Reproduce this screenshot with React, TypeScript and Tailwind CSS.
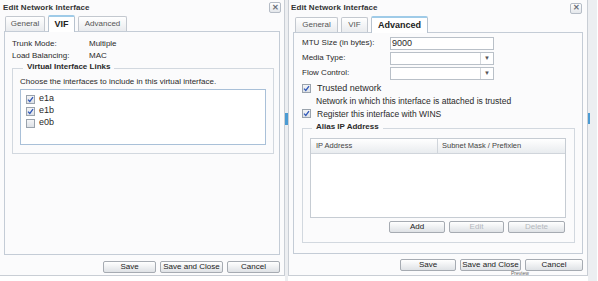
import React from 'react';

const font = "font-['Liberation_Sans',Arial,sans-serif]";
const dots = 'bg-[#fbfbfc] bg-[radial-gradient(#eef0f3_0.6px,transparent_0.7px)] bg-[length:4px_4px]';

function CloseBox() {
  return (
    <div className="w-[12px] h-[11px] border border-[#b5bcc6] rounded-[2px] bg-gradient-to-b from-white to-[#e4e7eb] flex items-center justify-center text-[8px] leading-none font-bold text-[#6a717a]">
      ✕
    </div>
  );
}

function Btn({ label, w, disabled }: { label: string; w: string; disabled?: boolean }) {
  return (
    <div
      className={`${w} h-[12px] border border-[#a6abb2] rounded-[2px] bg-gradient-to-b from-white to-[#dfe2e6] flex items-center justify-center text-[8px] leading-none ${
        disabled ? 'text-[#b4b8bd]' : 'text-[#222]'
      }`}
    >
      {label}
    </div>
  );
}

function Check({ on }: { on?: boolean }) {
  return (
    <div className="w-[9px] h-[9px] border border-[#9aa3ad] bg-gradient-to-b from-[#f4f5f7] to-[#dde1e6] flex items-center justify-center">
      {on && (
        <svg width="7" height="7" viewBox="0 0 7 7">
          <path d="M1 3.6 L2.8 5.4 L6 1.2" fill="none" stroke="#2f57b8" strokeWidth="1.3" />
        </svg>
      )}
    </div>
  );
}

function Tabs({ active, widths }: { active: string; widths: Record<string, string> }) {
  return (
    <div className="flex items-end gap-[3px] h-[17px]">
      {['General', 'VIF', 'Advanced'].map((t) => {
        const on = t === active;
        return (
          <div
            key={t}
            className={`${widths[t]} flex items-center justify-center border border-b-0 rounded-t-[2px] leading-none ${
              on
                ? 'h-[17px] bg-white border-[#b8c3cf] border-t-2 border-t-[#9fcbe8] font-bold text-[9px] text-[#222] -mb-px relative'
                : 'h-[15px] bg-gradient-to-b from-white to-[#e9ebee] border-[#c3c8cf] text-[8px] text-[#555]'
            }`}
          >
            {t}
          </div>
        );
      })}
    </div>
  );
}

function Footer({ widths }: { widths: [string, string, string] }) {
  return (
    <div className="flex justify-end gap-[4px]">
      <Btn label="Save" w={widths[0]} />
      <Btn label="Save and Close" w={widths[1]} />
      <Btn label="Cancel" w={widths[2]} />
    </div>
  );
}

function Field({ label, arrow }: { label: string; arrow?: boolean }) {
  return (
    <div className="flex items-center h-[13px]">
      <div className="w-[88px] text-[8px]">{label}</div>
      <div className="w-[104px] h-[13px] border border-[#b9c0c8] bg-white flex justify-end">
        {arrow && (
          <div className="w-[13px] border-l border-[#d2d6db] flex items-center justify-center text-[6px] text-[#555]">▼</div>
        )}
      </div>
    </div>
  );
}

export default function App() {
  return (
    <div className={`w-[598px] h-[281px] flex bg-white text-[#2a2a2a] ${font}`}>
      {/* left dialog */}
      <div className={`w-[285px] h-[276px] flex flex-col border-r border-b border-[#c9ced5] ${dots}`}>
        <div className="h-[14px] flex items-center justify-between pl-[3px] pr-[3px] pt-[1px]">
          <span className="text-[8px] font-bold text-[#333] tracking-[0.1px]">Edit Network Interface</span>
          <CloseBox />
        </div>
        <div className="pl-[5px]">
          <Tabs active="VIF" widths={{ General: 'w-[40px]', VIF: 'w-[27px]', Advanced: 'w-[49px]' }} />
        </div>
        <div className={`mx-[4px] h-[224px] border border-[#c4ccd6] px-[7px] pt-[6px] ${dots}`}>
          <div className="flex items-center h-[12px] text-[8px]">
            <span className="w-[77px]">Trunk Mode:</span>
            <span>Multiple</span>
          </div>
          <div className="flex items-center h-[12px] text-[8px]">
            <span className="w-[77px]">Load Balancing:</span>
            <span>MAC</span>
          </div>
          <div className="mt-[6px] w-[262px] h-[86px] border border-[#d2d8df] px-[7px] relative">
            <div className="absolute -top-[6px] left-[10px] px-[4px] bg-[#fbfbfc] text-[8px] font-bold leading-none">
              Virtual Interface Links
            </div>
            <div className="pt-[9px] text-[8px] h-[20px] leading-none">
              Choose the interfaces to include in this virtual interface.
            </div>
            <div className="w-[246px] h-[56px] border border-[#a9c0d8] bg-white pt-[3px] pl-[5px]">
              {[
                ['e1a', true],
                ['e1b', true],
                ['e0b', false],
              ].map(([n, on]) => (
                <div key={n as string} className="flex items-center h-[12px] gap-[4px] text-[9px]">
                  <Check on={on as boolean} />
                  <span>{n as string}</span>
                </div>
              ))}
            </div>
          </div>
        </div>
        <div className="pt-[6px] pr-[4px]">
          <Footer widths={['w-[53px]', 'w-[63px]', 'w-[53px]']} />
        </div>
      </div>

      {/* divider strip */}
      <div className="w-[3px] h-[281px] bg-[#eceef1] pt-[113px]">
        <div className="w-[3px] h-[12px] bg-[#4b9bd3]" />
      </div>

      {/* right dialog */}
      <div className={`w-[300px] h-[276px] flex flex-col border-l border-r border-b border-[#c9ced5] ${dots}`}>
        <div className="h-[15px] flex items-center justify-between pl-[2px] pr-[5px] pt-[2px]">
          <span className="text-[8px] font-bold text-[#333] tracking-[0.1px]">Edit Network Interface</span>
          <CloseBox />
        </div>
        <div className="pl-[6px]">
          <Tabs active="Advanced" widths={{ General: 'w-[43px]', VIF: 'w-[27px]', Advanced: 'w-[57px]' }} />
        </div>
        <div className={`mx-[4px] h-[223px] border border-[#c4ccd6] pl-[8px] pt-[4px] ${dots}`}>
          <div className="flex flex-col gap-[2px]">
            <div className="flex items-center h-[13px]">
              <div className="w-[88px] text-[8px]">MTU Size (in bytes):</div>
              <div className="w-[104px] h-[13px] border border-[#b9c0c8] bg-white text-[9px] leading-[11px] pl-[1px]">9000</div>
            </div>
            <Field label="Media Type:" arrow />
            <Field label="Flow Control:" arrow />
          </div>
          <div className="flex items-center gap-[6px] h-[12px] mt-[3px] text-[9px]">
            <Check on />
            <span>Trusted network</span>
          </div>
          <div className="pl-[14px] h-[13px] flex items-center text-[8.5px]">
            Network in which this interface is attached is trusted
          </div>
          <div className="flex items-center gap-[6px] h-[12px] text-[8.5px]">
            <Check on />
            <span>Register this interface with WINS</span>
          </div>
          <div className="mt-[8px] w-[273px] h-[115px] border border-[#d2d8df] px-[7px] pt-[9px] relative">
            <div className="absolute -top-[6px] left-[9px] px-[4px] bg-[#fbfbfc] text-[8px] font-bold leading-none">
              Alias IP Address
            </div>
            <div className="w-[256px] h-[80px] border border-[#c6ccd3] bg-white">
              <div className="flex h-[15px] bg-gradient-to-b from-white to-[#e9ecef] border-b border-[#d0d5db] text-[7.5px] text-[#444]">
                <div className="w-[127px] border-r border-[#d0d5db] flex items-center pl-[5px]">IP Address</div>
                <div className="flex items-center pl-[4px]">Subnet Mask / Prefixlen</div>
              </div>
            </div>
            <div className="flex justify-end gap-[4px] mt-[3px] pr-[2px]">
              <Btn label="Add" w="w-[56px]" />
              <Btn label="Edit" w="w-[55px]" disabled />
              <Btn label="Delete" w="w-[57px]" disabled />
            </div>
          </div>
        </div>
        <div className="pt-[5px] pr-[4px]">
          <Footer widths={['w-[56px]', 'w-[61px]', 'w-[58px]']} />
        </div>
        <div className="pl-[222px] text-[5px] leading-none text-[#666] h-[4px] overflow-hidden">Preview</div>
      </div>

      {/* right strip */}
      <div className="w-[9px] h-[281px] bg-[#eceef1] pt-[113px]">
        <div className="w-[2px] h-[11px] bg-[#4b9bd3]" />
      </div>
    </div>
  );
}
